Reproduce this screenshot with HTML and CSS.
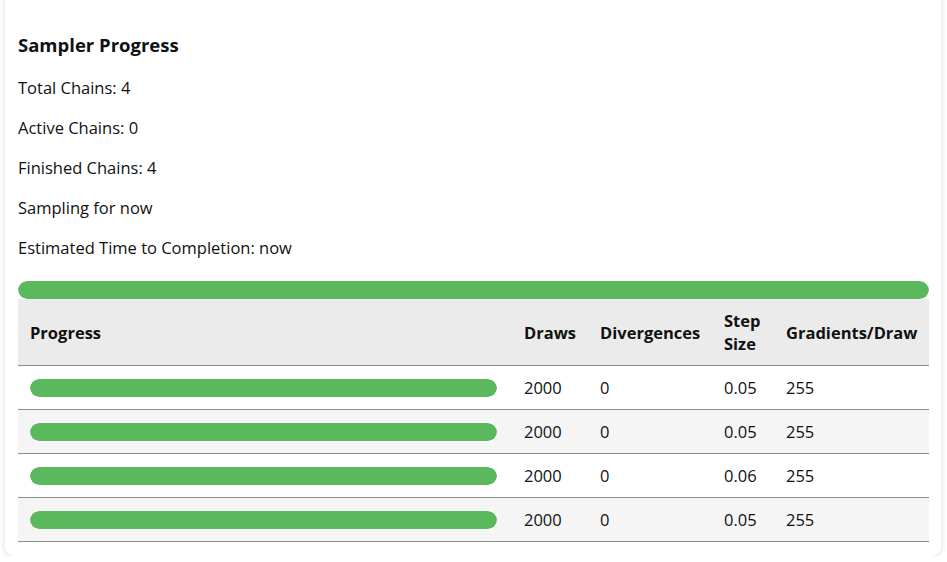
FILE: index.html
```html
<!DOCTYPE html>
<html>
<head>
<meta charset="utf-8">
<title>Sampler Progress</title>
<link rel="stylesheet" href="styles.css">
</head>
<body>
<div class="card">
  <h3 class="title">Sampler Progress</h3>
  <p class="stat">Total Chains: 4</p>
  <p class="stat">Active Chains: 0</p>
  <p class="stat">Finished Chains: 4</p>
  <p class="stat">Sampling for now</p>
  <p class="stat">Estimated Time to Completion: now</p>

  <div class="bar bar-total"><div class="bar-fill" style="width:100%"></div></div>

  <table class="chains">
    <colgroup>
      <col class="c-progress">
      <col class="c-draws">
      <col class="c-div">
      <col class="c-step">
      <col class="c-grad">
    </colgroup>
    <thead>
      <tr>
        <th>Progress</th>
        <th>Draws</th>
        <th>Divergences</th>
        <th>Step<br>Size</th>
        <th>Gradients/Draw</th>
      </tr>
    </thead>
    <tbody>
      <tr>
        <td><div class="bar"><div class="bar-fill" style="width:100%"></div></div></td>
        <td>2000</td><td>0</td><td>0.05</td><td>255</td>
      </tr>
      <tr>
        <td><div class="bar"><div class="bar-fill" style="width:100%"></div></div></td>
        <td>2000</td><td>0</td><td>0.05</td><td>255</td>
      </tr>
      <tr>
        <td><div class="bar"><div class="bar-fill" style="width:100%"></div></div></td>
        <td>2000</td><td>0</td><td>0.06</td><td>255</td>
      </tr>
      <tr>
        <td><div class="bar"><div class="bar-fill" style="width:100%"></div></div></td>
        <td>2000</td><td>0</td><td>0.05</td><td>255</td>
      </tr>
    </tbody>
  </table>
</div>
</body>
</html>
```
FILE: styles.css
```css
html, body {
  margin: 0;
  padding: 0;
  background: #ffffff;
}

body {
  font-family: "Open Sans", "Noto Sans", sans-serif;
  font-size: 16.5px;
  color: #111;
  overflow: hidden;
}

.card {
  margin: -12px 6px 0 5px;
  padding: 44px 12px 14px 13px;
  background: #fff;
  border-radius: 9px;
  box-shadow: 0 1px 6px rgba(0, 0, 0, 0.15);
}

.title {
  margin: 0 0 18px;
  font-size: 18.5px;
  font-weight: 700;
  line-height: 26px;
}

.stat {
  margin: 16px 0;
  line-height: 24px;
}

.title + .stat {
  margin-top: 0;
}

.bar {
  height: 18px;
  border-radius: 9px;
  overflow: hidden;
}

.bar-fill {
  height: 100%;
  background: #5cb85c;
  border-radius: 9px;
}

.bar-total {
  margin-top: 21px;
}

.chains {
  width: 100%;
  border-collapse: collapse;
  table-layout: fixed;
}

.c-progress { width: 494px; }
.c-draws { width: 76px; }
.c-div { width: 124px; }
.c-step { width: 62px; }
.c-grad { width: 155px; }

.chains th {
  background: #ebebeb;
  text-align: left;
  font-weight: 700;
  padding: 10px 12px;
  line-height: 23px;
  height: 46px;
  border-bottom: 1px solid #8c8c8c;
  white-space: nowrap;
}

.chains td {
  padding: 0 12px;
  height: 43px;
  line-height: 24px;
  border-bottom: 1px solid #8c8c8c;
}

.chains td:first-child {
  padding-right: 15px;
}

.chains tbody tr:nth-child(even) td {
  background: #f5f5f5;
}
```
